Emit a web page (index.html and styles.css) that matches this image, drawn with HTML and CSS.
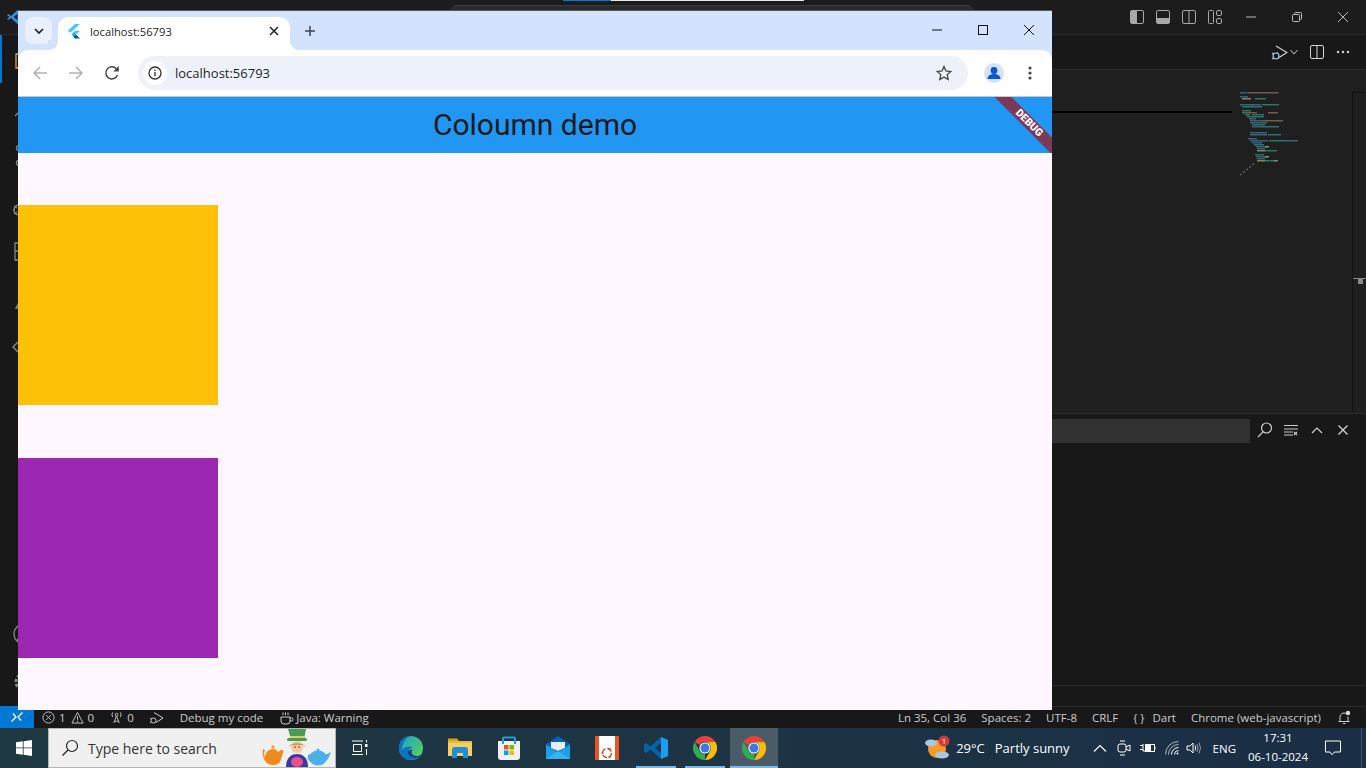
FILE: index.html
```html
<!DOCTYPE html>
<html lang="en">
<head>
  <meta charset="UTF-8">
  <title>Coloumn demo</title>
  <link rel="stylesheet" href="styles.css">
</head>
<body>
  <svg class="defs" width="0" height="0">
    <symbol id="chrome" viewBox="0 0 24 24">
      <path fill="#ea4335" d="M1.6 6A12 12 0 0 1 22.4 6H12a6 6 0 0 0-5.2 3z"/>
      <path fill="#fbbc04" d="M22.4 6A12 12 0 0 1 12 24l5.2-9A6 6 0 0 0 12 6z"/>
      <path fill="#34a853" d="M12 24A12 12 0 0 1 1.6 6l5.2 9A6 6 0 0 0 12 18z"/>
      <circle cx="12" cy="12" r="5.6" fill="#fff"/>
      <circle cx="12" cy="12" r="4.5" fill="#3b78e7"/>
    </symbol>
  </svg>

  <div class="desktop">
    <div class="vscode">
      <div class="titlebar">
        <svg class="vs-logo" width="16" height="16" viewBox="0 0 16 16"><path fill="#2f8fe0" d="M11.5 1 5 7 2.2 5 1 6l2.6 2L1 10l1.2 1L5 9l6.5 6 3.5-1.5v-11zM11.5 5v6L7.6 8z" fill-rule="evenodd"/></svg>
        <div class="command-center"></div>
        <div class="progress"><span class="progress-blue"></span><span class="progress-white"></span></div>
        <div class="layout-icons">
          <svg width="14" height="14" viewBox="0 0 14 14"><rect x=".5" y=".5" width="13" height="13" rx="1.5" fill="none" stroke="#a8a8a8"/><rect x="1" y="1" width="6" height="12" fill="#a8a8a8"/></svg>
          <svg width="14" height="14" viewBox="0 0 14 14"><rect x=".5" y=".5" width="13" height="13" rx="1.5" fill="none" stroke="#a8a8a8"/><rect x="1" y="8" width="12" height="5" fill="#a8a8a8"/></svg>
          <svg width="14" height="14" viewBox="0 0 14 14"><rect x=".5" y=".5" width="13" height="13" rx="1.5" fill="none" stroke="#a8a8a8"/><path d="M7 1v12" stroke="#a8a8a8"/></svg>
          <svg width="14" height="14" viewBox="0 0 14 14" fill="none" stroke="#a8a8a8"><rect x=".5" y=".5" width="5" height="13" rx="1"/><rect x="8.5" y=".5" width="5" height="5" rx="1.5"/><rect x="8.5" y="8.5" width="5" height="5" rx="1.5"/></svg>
        </div>
        <div class="vs-controls">
          <div class="vs-control"><svg width="12" height="12" viewBox="0 0 12 12"><path d="M1 6h10" stroke="#bbb"/></svg></div>
          <div class="vs-control"><svg width="12" height="12" viewBox="0 0 12 12" fill="none" stroke="#bbb"><rect x="1.5" y="3.5" width="7" height="7" rx="1"/><path d="M3.5 3.5v-1a1 1 0 0 1 1-1h5a1 1 0 0 1 1 1v5a1 1 0 0 1-1 1h-1"/></svg></div>
          <div class="vs-control"><svg width="12" height="12" viewBox="0 0 12 12"><path d="M1 1l10 10M11 1 1 11" stroke="#bbb"/></svg></div>
        </div>
      </div>

      <div class="vs-main">
        <div class="activity">
          <div class="activity-item is-active"><svg width="24" height="24" viewBox="0 0 24 24" fill="none" stroke="#d7d7d7" stroke-width="1.3"><path d="M9 3h8l4 4v12H9z"/><path d="M9 7H4v14h11v-2" stroke="#e0a050"/></svg></div>
          <div class="activity-item"><svg width="24" height="24" viewBox="0 0 24 24" fill="none" stroke="#868686" stroke-width="1.3"><circle cx="14" cy="10" r="6"/><path d="M9.5 14.5 3 21"/></svg></div>
          <div class="activity-item"><svg width="24" height="24" viewBox="0 0 24 24" fill="none" stroke="#868686" stroke-width="1.3"><circle cx="7" cy="5" r="2.5"/><circle cx="7" cy="20" r="2.5"/><circle cx="17" cy="8" r="2.5"/><path d="M7 8v9M17 11c0 4-10 2-10 6"/></svg></div>
          <div class="activity-item activity-debug"><svg width="24" height="24" viewBox="0 0 24 24" fill="none" stroke="#868686" stroke-width="1.3"><path d="M10 3l11 8-11 8"/><circle cx="7" cy="16" r="5"/><path d="M2 12l3 2M2 20l3-2M1 16h2"/></svg></div>
          <div class="activity-item"><svg width="24" height="24" viewBox="0 0 24 24" fill="none" stroke="#868686" stroke-width="1.3"><path d="M3 4h9v8h8v9H3zM3 12h9v9"/><rect x="15" y="2" width="7" height="7"/></svg></div>
          <div class="activity-item"><svg width="24" height="24" viewBox="0 0 24 24" fill="none" stroke="#868686" stroke-width="1.3"><path d="M9 3h6M10 3v7l-6 11h16l-6-11V3"/></svg></div>
          <div class="activity-item"><svg width="24" height="24" viewBox="0 0 24 24" fill="none" stroke="#868686" stroke-width="1.5"><path d="M6 7 1 12l5 5M18 7l5 5-5 5"/></svg></div>
          <div class="activity-gap"></div>
          <div class="activity-item"><svg width="24" height="24" viewBox="0 0 24 24" fill="none" stroke="#868686" stroke-width="1.3"><circle cx="12" cy="12" r="10"/><circle cx="12" cy="9" r="3.5"/><path d="M5 19c2-5 12-5 14 0"/></svg></div>
          <div class="activity-item"><svg width="24" height="24" viewBox="0 0 24 24" fill="none" stroke="#868686" stroke-width="3" stroke-dasharray="3 2"><circle cx="12" cy="12" r="8"/></svg></div>
        </div>

        <div class="workbench">
          <div class="tabrow">
            <svg class="tab-debug" width="17" height="17" viewBox="0 0 17 17" fill="none" stroke="#d5d5d5" stroke-width="1.2"><path d="M5 2l11 6.500-8 5"/><circle cx="5" cy="12" r="3" stroke="#a9c8f2"/><path d="M1 9l2 1M1 15l2-1M7 8.500 6 9.500" stroke="#a9c8f2"/></svg>
            <svg class="tab-chevron" width="10" height="10" viewBox="0 0 10 10" fill="none" stroke="#c8c8c8"><path d="M1.5 3 5 7l3.500-4"/></svg>
            <svg class="tab-split" width="14" height="14" viewBox="0 0 14 14" fill="none" stroke="#d5d5d5"><rect x=".5" y=".5" width="13" height="13" rx="1.500"/><path d="M7 1v12"/></svg>
            <svg class="tab-more" width="14" height="4" viewBox="0 0 14 4" fill="#d5d5d5"><circle cx="2" cy="2" r="1.200"/><circle cx="7" cy="2" r="1.200"/><circle cx="12" cy="2" r="1.200"/></svg>
          </div>

          <div class="editor">
            <div class="code-area"><div class="sticky-shadow"></div></div>
            <div class="minimap">
              <svg width="64" height="86" viewBox="0 0 64 86">
                <g fill="#3f6d8c" opacity=".85">
                  <rect x="0" y="0" width="7" height="1.500"/><rect x="0" y="4" width="8" height="1.500"/><rect x="0" y="12" width="7" height="1.500"/><rect x="14" y="12" width="7" height="1.500"/>
                  <rect x="10" y="28" width="13" height="1.500"/><rect x="10" y="30" width="17" height="1.500"/><rect x="12" y="34" width="11" height="1.500"/><rect x="10" y="40" width="17" height="1.500"/>
                  <rect x="10" y="42" width="17" height="1.500"/><rect x="8" y="46" width="9" height="1.500"/><rect x="10" y="48" width="18" height="1.500"/><rect x="44" y="48" width="14" height="1.500"/>
                  <rect x="12" y="50" width="10" height="1.500"/><rect x="16" y="54" width="12" height="1.500"/><rect x="17" y="56" width="8" height="1.500"/><rect x="16" y="64" width="12" height="1.500"/><rect x="17" y="66" width="8" height="1.500"/>
                </g>
                <g fill="#7f6252" opacity=".9">
                  <rect x="7.500" y="0" width="31" height="1.500"/><rect x="7" y="20" width="10" height="1.500"/><rect x="23" y="28" width="20" height="1.500"/><rect x="28" y="20" width="10" height="1.500"/>
                  <rect x="5" y="22" width="5" height="1.500"/>
                </g>
                <g fill="#2f7f6e" opacity=".9">
                  <rect x="15" y="6" width="11" height="1.500"/><rect x="7" y="12" width="7" height="1.500"/><rect x="22" y="12" width="17" height="1.500"/><rect x="2" y="14" width="20" height="1.500"/>
                  <rect x="2" y="18" width="9" height="1.500"/><rect x="2" y="20" width="5" height="1.500"/><rect x="12" y="22" width="12" height="1.500"/><rect x="7" y="24" width="17" height="1.500"/>
                  <rect x="9" y="26" width="7" height="1.500"/><rect x="12" y="32" width="13" height="1.500"/><rect x="23" y="34" width="16" height="1.500"/><rect x="28" y="42" width="13" height="1.500"/>
                  <rect x="29" y="48" width="15" height="1.500"/><rect x="14" y="52" width="10" height="1.500"/><rect x="25" y="58" width="12" height="1.500"/><rect x="15" y="62" width="9" height="1.500"/><rect x="25" y="68" width="10" height="1.500"/>
                </g>
                <g fill="#8f9a7a" opacity=".85">
                  <rect x="2" y="6" width="9" height="1.500"/><rect x="17" y="58" width="8" height="1.500"/><rect x="17" y="68" width="8" height="1.500"/><rect x="25" y="54" width="4" height="1.500"/><rect x="25" y="64" width="4" height="1.500"/><rect x="34" y="68" width="4" height="1.500"/>
                </g>
                <path d="M0 83 15 71" stroke="#6a6a6a" stroke-width="1.200" stroke-dasharray="2 2"/>
              </svg>
            </div>
            <div class="ruler"><div class="ruler-mark"></div></div>
          </div>

          <div class="panel">
            <div class="panel-head">
              <div class="filter-box"></div>
              <div class="panel-tools">
                <svg width="16" height="16" viewBox="0 0 16 16" fill="none" stroke="#d0d0d0" stroke-width="1.200"><circle cx="9.500" cy="6" r="5"/><path d="M6 9.800 1 15"/></svg>
                <svg class="tool-clear" width="16" height="12" viewBox="0 0 16 12" fill="none" stroke="#c8c8c8"><path d="M1 1.500h14M1 5h14M1 8h9M1 11h9"/><path d="M11 8l3 3M14 8l-3 3" stroke-width="1.200"/></svg>
                <svg class="tool-up" width="12" height="8" viewBox="0 0 12 8" fill="none" stroke="#d0d0d0" stroke-width="1.200"><path d="M1 7l5-5 5 5"/></svg>
                <svg class="tool-close" width="12" height="12" viewBox="0 0 12 12" fill="none" stroke="#d8d8d8" stroke-width="1.200"><path d="M1.500 1.500l9 9M10.500 1.500l-9 9"/></svg>
              </div>
            </div>
          </div>
          <div class="panel-foot"></div>
        </div>
      </div>

      <div class="statusbar">
        <div class="remote"><svg width="14" height="12" viewBox="0 0 14 12" fill="none" stroke="#fff" stroke-width="1.300"><path d="M1.500 10.500 6 6 3 2.500M12.500 1.500 8 6l3 3.500"/></svg></div>
        <div class="st-left">
          <div class="st-item">
            <svg width="13" height="13" viewBox="0 0 14 14" fill="none" stroke="#ccc"><circle cx="7" cy="7" r="6"/><path d="M4.500 4.500l5 5M9.500 4.500l-5 5"/></svg>
            <span>1</span>
            <svg class="st-warn" width="13" height="13" viewBox="0 0 14 14" fill="none" stroke="#ccc"><path d="M7 1.500 13 13H1zM7 5.500v4M7 10.500v1.500"/></svg>
            <span>0</span>
          </div>
          <div class="st-item st-antenna">
            <svg width="13" height="13" viewBox="0 0 14 14" fill="none" stroke="#ccc"><circle cx="7" cy="4" r="1.500"/><path d="M7 5.500 4 13M7 5.500 10 13M5 11h4M3 1.500Q1 4 3 6.500M11 1.500q2 2.500 0 5"/></svg>
            <span>0</span>
          </div>
          <div class="st-item st-debug">
            <svg width="15" height="14" viewBox="0 0 15 14" fill="none" stroke="#ccc"><path d="M5 1.500l9 5.500-7 4.500"/><circle cx="4.500" cy="9.500" r="2.500"/><path d="M1 7l1.500 1M1 12l1.500-1"/></svg>
          </div>
          <div class="st-item st-code">Debug my code</div>
          <div class="st-item st-java">
            <svg width="15" height="14" viewBox="0 0 15 14" fill="none" stroke="#ccc"><path d="M2 6h9v4a3 3 0 0 1-3 3H5a3 3 0 0 1-3-3zM11 7h1.500a1.500 1.500 0 0 1 0 3H11M4 4V1.500M6.500 4V1.500M9 4V1.500"/></svg>
            <span>Java: Warning</span>
          </div>
        </div>
        <div class="st-right">
          <div class="st-item">Ln 35, Col 36</div>
          <div class="st-item">Spaces: 2</div>
          <div class="st-item">UTF-8</div>
          <div class="st-item">CRLF</div>
          <div class="st-item st-lang"><span class="st-braces">{ }</span><span>Dart</span></div>
          <div class="st-item">Chrome (web-javascript)</div>
          <div class="st-item st-bell">
            <svg width="15" height="15" viewBox="0 0 15 15" fill="none" stroke="#ccc"><path d="M3 11V7a4 4 0 0 1 6-3.500M11 6.500V11M1.500 11.500h11M6 13.500h2.500"/><circle cx="11" cy="3" r="2.200" fill="#ddd" stroke="none"/></svg>
          </div>
        </div>
      </div>
    </div>

    <div class="taskbar">
      <div class="start">
        <svg width="16" height="16" viewBox="0 0 16 16" fill="#fff"><path d="M0 2.200 6.800 1.300v6.200H0zM7.600 1.200 16 0v7.500H7.600zM0 8.300h6.800v6.400L0 13.800zM7.600 8.300H16V16l-8.400-1.200z"/></svg>
      </div>
      <div class="search">
        <svg width="18" height="18" viewBox="0 0 18 18" fill="none" stroke="#222" stroke-width="1.200"><circle cx="11" cy="7" r="5.500"/><path d="M7 11 1.500 16.500"/></svg>
        <span class="search-text">Type here to search</span>
        <svg class="hatter" width="70" height="38" viewBox="0 0 70 38">
          <path fill="#f08a1a" d="M11 20c-5 0-8 4-8 9-1-3-1-6 0-8l-2-1c-1 4 0 10 3 13 3 4 11 4 14 0l3-9c1-1 0-4-2-3l-3 2c-1-2-3-3-5-3z"/>
          <circle cx="11" cy="18" r="1.800" fill="#f5a030"/>
          <path fill="#3b3aa0" d="M24 38c0-9 5-13 11-13s11 4 11 13z"/>
          <ellipse cx="35" cy="33" rx="6" ry="5" fill="#e8508c"/>
          <circle cx="35" cy="18" r="6" fill="#f2c9a0"/>
          <path fill="#d09a40" d="M27 18c0-5 16-5 16 0l-2-2H29z"/>
          <circle cx="33" cy="18" r=".8" fill="#335"/><circle cx="37" cy="18" r=".8" fill="#335"/>
          <path fill="#4a9a5a" d="M26 0h18l-2 10H29z"/>
          <rect x="25" y="9" width="20" height="3" rx="1.500" fill="#4a9a5a"/>
          <rect x="28" y="7" width="14" height="2" fill="#e0d060"/>
          <ellipse cx="56" cy="29" rx="9" ry="7.500" fill="#4ab0e8"/>
          <path fill="#4ab0e8" d="M61 27l8-4-3 7-4 3zM48 25c-3 0-3 7 1 8l1-2c-2-1-2-3 0-4z"/>
          <circle cx="56" cy="21" r="1.500" fill="#4ab0e8"/>
        </svg>
      </div>
      <div class="taskview">
        <svg width="16" height="16" viewBox="0 0 16 16" fill="none" stroke="#fff"><path d="M0 1h11M0 14.500h11M1.500 4.500h8v7h-8z"/><rect x="13" y="4" width="2.500" height="3" fill="#fff" stroke="none"/><path d="M14.500 0v2.500M14.500 9v6"/></svg>
      </div>
      <div class="apps">
        <div class="app">
          <svg width="24" height="24" viewBox="0 0 24 24"><defs><linearGradient id="edgeTop" x1="0" y1="0" x2="1" y2="1"><stop offset="0" stop-color="#17a2c8"/><stop offset="1" stop-color="#62d654"/></linearGradient></defs><circle cx="12" cy="12" r="12" fill="url(#edgeTop)"/><path fill="#0c72c4" d="M12 0C5 0 0 5.500 0 12c0 7 5.500 12 12 12 2.500 0 5-.8 7-2.200-4 1-8.500-.5-9.500-4-.8-3 1-5.500 4-6.300-3-2-9-1-10.500 3C3 8 6 1.500 12 0z"/><path fill="#0b3f7d" d="M9 16c0 4 4 6.500 9 5.800 2-.5 3.500-1.700 4.500-3.300-4 2.500-8 1.500-9.500-.5-1-1.500-.5-3.500 1-4.500-3 0-5 1-5 2.500z"/></svg>
        </div>
        <div class="app">
          <svg width="24" height="24" viewBox="0 0 24 24"><path fill="#d9a11c" d="M0 2.500h9l2 2.500H0z"/><path fill="#f6cf5c" d="M0 5h22l2 .5V20H0z"/><path fill="#e8b93c" d="M0 5h24v2H0z"/><path fill="#1f8fdc" d="M4 14c0-2 1-3 2-3h12c1 0 2 1 2 3v8h-5v-5H9v5H4z"/></svg>
        </div>
        <div class="app">
          <svg width="24" height="24" viewBox="0 0 24 24"><path fill="#f0f0f0" d="M1 5h22v16a3 3 0 0 1-3 3H4a3 3 0 0 1-3-3z"/><path fill="none" stroke="#19a0e2" stroke-width="2" d="M6 8V2.500a1 1 0 0 1 1-1h10a1 1 0 0 1 1 1V8"/><rect x="7" y="9" width="4.500" height="4.500" fill="#f25022"/><rect x="12.500" y="9" width="4.500" height="4.500" fill="#7fba00"/><rect x="7" y="14.500" width="4.500" height="4.500" fill="#00a4ef"/><rect x="12.500" y="14.500" width="4.500" height="4.500" fill="#ffb900"/></svg>
        </div>
        <div class="app">
          <svg width="24" height="24" viewBox="0 0 24 24"><path fill="#0a62b3" d="M12 0 24 8v4H0V8z"/><path fill="#e8edf2" d="M5 6h14v6l-7 3-7-3z"/><path fill="#1b9fe8" d="M0 8.500 12 16l12-7.500V23H0z"/><path fill="#35b4f2" d="M0 23 12 15l12 8z"/></svg>
        </div>
        <div class="app">
          <svg width="24" height="24" viewBox="0 0 24 24"><rect width="24" height="24" fill="#fff"/><rect width="4" height="24" fill="#e95420"/><rect x="20" width="4" height="24" fill="#e95420"/><circle cx="12" cy="17" r="4.500" fill="none" stroke="#d8402a" stroke-width="1.300" stroke-dasharray="5 2"/><circle cx="7.500" cy="17" r="1.100" fill="#d8402a"/><circle cx="14.500" cy="13" r="1.100" fill="#d8402a"/><circle cx="14.500" cy="21" r="1.100" fill="#d8402a"/></svg>
        </div>
        <div class="app has-window">
          <svg width="24" height="24" viewBox="0 0 24 24"><path fill="#0065a9" d="M17 1 6.500 10.500 2 7 0 8.500v7L2 17l4.500-3.500L17 23l7-3V4zM17 7v10l-6-5z" fill-rule="evenodd"/><path fill="#1f9cf0" d="M17 1l7 3v16l-7 3z"/></svg>
        </div>
        <div class="app has-window"><svg width="24" height="24"><use href="#chrome"/></svg></div>
        <div class="app has-window is-current"><svg width="24" height="24"><use href="#chrome"/></svg></div>
      </div>

      <div class="tray">
        <div class="weather">
          <svg width="26" height="26" viewBox="0 0 26 26"><circle cx="12" cy="14" r="9" fill="#f59a23"/><ellipse cx="6" cy="8" rx="6" ry="3.500" fill="#a9c6e8"/><ellipse cx="17" cy="20" rx="7" ry="3.500" fill="#a9c6e8"/><circle cx="19" cy="6" r="5.500" fill="#d23a3a"/><text class="weather-badge" x="19" y="9">1</text></svg>
          <span class="temp">29°C</span>
          <span class="sky">Partly sunny</span>
        </div>
        <div class="tray-icons">
          <svg class="tray-caret" width="14" height="8" viewBox="0 0 14 8" fill="none" stroke="#fff" stroke-width="1.100"><path d="M1 7.500 7 1.500l6 6"/></svg>
          <svg class="tray-meet" width="14" height="16" viewBox="0 0 14 16" fill="none" stroke="#fff"><rect x="1" y="4" width="8" height="8" rx="2"/><path d="M9 7l4-2v6l-4-2M3 1h5M3 15h5"/></svg>
          <svg class="tray-battery" width="16" height="12" viewBox="0 0 16 12" fill="none" stroke="#fff"><rect x="5.500" y="2.500" width="9" height="7"/><rect x="5.500" y="2.500" width="5" height="7" fill="#fff"/><path d="M0 3.500h3M0 7.500h3M3 2v7h2M15 5v2"/></svg>
          <svg class="tray-wifi" width="14" height="14" viewBox="0 0 14 14" fill="none" stroke="#fff"><path d="M.5 13.500a13 13 0 0 1 13-13M3.500 13.500a10 10 0 0 1 10-10" opacity=".65"/><path d="M6.500 13.500a7 7 0 0 1 7-7M9.500 13.500a4 4 0 0 1 4-4"/><circle cx="12.500" cy="12.500" r="1" fill="#fff" stroke="none"/></svg>
          <svg class="tray-speaker" width="16" height="14" viewBox="0 0 16 14" fill="none" stroke="#fff"><path d="M1 5h3l3-3v10L4 9H1z"/><path d="M9 4.500q1.500 2.500 0 5"/><path d="M11 3q2 4 0 8M13 1.500q3 5.500 0 11" opacity=".5"/></svg>
          <span class="tray-lang">ENG</span>
        </div>
        <div class="clock"><span>17:31</span><span>06-10-2024</span></div>
        <div class="notify">
          <svg width="16" height="16" viewBox="0 0 16 16" fill="none" stroke="#fff"><path d="M.5 1h15v11H9.500L7 14.700 5 12H.5z"/></svg>
        </div>
      </div>
    </div>

    <!-- browser window lies over the editor -->
    <div class="browser">
      <div class="tabstrip">
        <div class="tab-search"><svg width="10" height="6" viewBox="0 0 10 6" fill="none" stroke="#1f1f1f" stroke-width="1.700"><path d="M1 1l4 4 4-4"/></svg></div>
        <div class="tab">
          <svg width="14" height="16" viewBox="0 0 14 16"><path fill="#47c5fb" d="M8 1h5L3.200 9.800.8 7.800z"/><path fill="#47c5fb" d="M8 7.700h5L8.800 11.800 6.300 9.400z"/><path fill="#00569e" d="M6.300 13.700 8.800 11.500 13 15.500H8z"/><path fill="#00b5f8" d="M4.700 11.500 6.900 9.300 9 11.500l-2.500 2.300z"/></svg>
          <span class="tab-title">localhost:56793</span>
          <svg class="tab-close" width="10" height="10" viewBox="0 0 10 10" stroke="#1f1f1f" stroke-width="1.500"><path d="M1 1l8 8M9 1 1 9"/></svg>
        </div>
        <svg class="tab-new" width="12" height="12" viewBox="0 0 12 12" stroke="#444" stroke-width="1.500"><path d="M6 1v10M1 6h10"/></svg>
        <div class="win-controls">
          <div class="win-control"><svg width="12" height="12" viewBox="0 0 12 12"><path d="M1 6h10" stroke="#111"/></svg></div>
          <div class="win-control"><svg width="12" height="12" viewBox="0 0 12 12" fill="none"><rect x="1.500" y="1.500" width="9" height="9" stroke="#111"/></svg></div>
          <div class="win-control"><svg width="12" height="12" viewBox="0 0 12 12"><path d="M1 1l10 10M11 1 1 11" stroke="#111"/></svg></div>
        </div>
      </div>

      <div class="toolbar">
        <div class="nav-btn"><svg width="16" height="16" viewBox="0 0 16 16" fill="none" stroke="#b0b3b8" stroke-width="1.500"><path d="M15 8H2M8 2 2 8l6 6"/></svg></div>
        <div class="nav-btn"><svg width="16" height="16" viewBox="0 0 16 16" fill="none" stroke="#b0b3b8" stroke-width="1.500"><path d="M1 8h13M8 2l6 6-6 6"/></svg></div>
        <div class="nav-btn"><svg width="16" height="16" viewBox="0 0 16 16" fill="none" stroke="#444746" stroke-width="1.500"><path d="M13.500 10A6 6 0 1 1 12.300 3.800L14 5.500"/><path fill="#444746" stroke="none" d="M14.800 1v5.500H9.300z"/></svg></div>
        <div class="omnibox">
          <div class="site-info"><svg width="14" height="14" viewBox="0 0 14 14" fill="none" stroke="#333" stroke-width="1.300"><circle cx="7" cy="7" r="6"/><path d="M7 6v4.200M7 3.500v1.400"/></svg></div>
          <span class="url">localhost:56793</span>
          <svg class="star" width="16" height="16" viewBox="0 0 16 16" fill="none" stroke="#444746" stroke-width="1.300"><path d="M8 1.500l2 4.500 4.800.5-3.600 3.200 1 4.800L8 12.100 3.800 14.500l1-4.800L1.200 6.500 6 6z"/></svg>
        </div>
        <div class="profile"><svg width="20" height="20" viewBox="0 0 20 20"><circle cx="10" cy="10" r="10" fill="#d3e3fd"/><circle cx="10" cy="7.500" r="3.400" fill="#0b57d0"/><path fill="#0b57d0" d="M3.500 16c0-3.500 3-5 6.500-5s6.500 1.500 6.500 5z"/></svg></div>
        <div class="menu-dots"><svg width="4" height="14" viewBox="0 0 4 14" fill="#444746"><circle cx="2" cy="2" r="1.600"/><circle cx="2" cy="7" r="1.600"/><circle cx="2" cy="12" r="1.600"/></svg></div>
      </div>

      <div class="flutter-app">
        <div class="appbar">
          <span class="appbar-title">Coloumn demo</span>
          <div class="debug-banner">DEBUG</div>
        </div>
        <div class="app-body">
          <div class="box box-amber"></div>
          <div class="box box-purple"></div>
        </div>
      </div>
    </div>
  </div>
</body>
</html>
```

FILE: styles.css
```css
* {
  box-sizing: border-box;
}

body {
  margin: 0;
  background-color: #181818;
  font-family: "Open Sans", "Noto Sans", sans-serif;
  overflow: hidden;
}

.defs {
  position: absolute;
}

svg {
  display: block;
  flex: none;
}

.desktop {
  position: relative;
  width: 1366px;
  height: 768px;
  display: flex;
  flex-direction: column;
}

/* vscode behind the browser */
.vscode {
  flex: 1;
  display: flex;
  flex-direction: column;
  min-height: 0;
}

.titlebar {
  position: relative;
  height: 35px;
  flex: none;
  display: flex;
  align-items: center;
  padding-left: 6px;
  background-color: #1c1c1c;
  border-bottom: 1px solid #2b2b2b;
}

.command-center {
  align-self: flex-start;
  width: 522px;
  height: 24px;
  margin: 5px 0 0 429px;
  background-color: #2a2a2a;
  border: 1px solid #3c3c3c;
  border-radius: 6px;
}

.progress {
  position: absolute;
  top: 0;
  left: 563px;
  display: flex;
  height: 1px;
}

.progress-blue {
  width: 48px;
  background-color: #0078d4;
}

.progress-white {
  width: 193px;
  background-color: #e8e8e8;
}

.layout-icons {
  display: flex;
  gap: 12px;
  margin-left: auto;
  margin-right: 6px;
}

.vs-controls {
  display: flex;
}

.vs-control {
  width: 46px;
  height: 34px;
  display: flex;
  align-items: center;
  justify-content: center;
}

.vs-main {
  flex: 1;
  display: flex;
  min-height: 0;
}

.activity {
  width: 48px;
  flex: none;
  display: flex;
  flex-direction: column;
  background-color: #181818;
}

.activity-item {
  height: 48px;
  flex: none;
  display: flex;
  align-items: center;
  justify-content: center;
}

.activity-item.is-active {
  border-left: 2px solid #0078d4;
  padding-right: 2px;
}

.activity-debug {
  padding-top: 6px;
}

.activity-gap {
  flex: 1;
}

.workbench {
  flex: 1;
  min-width: 0;
  display: flex;
  flex-direction: column;
}

.tabrow {
  height: 35px;
  flex: none;
  display: flex;
  align-items: center;
  padding-right: 16px;
  justify-content: flex-end;
  background-color: #181818;
  border-bottom: 1px solid #2b2b2b;
}

.tab-chevron {
  margin-left: 1px;
}

.tab-split {
  margin-left: 11px;
}

.tab-more {
  margin-left: 12px;
}

.editor {
  flex: 1;
  display: flex;
  min-height: 0;
  background-color: #1f1f1f;
}

.code-area {
  flex: 1;
  padding-top: 41px;
}

.sticky-shadow {
  height: 2px;
  background-color: #000;
}

.minimap {
  width: 120px;
  flex: none;
  padding: 22px 0 0 8px;
}

.ruler {
  width: 14px;
  flex: none;
  margin-top: 22px;
  padding-top: 185px;
  border-left: 1px solid #111;
  border-top: 1px solid #111;
}

.ruler-mark {
  height: 1px;
  background-color: #8a8a8a;
  position: relative;
}

.ruler-mark::after {
  content: "";
  position: absolute;
  top: 1px;
  left: 5px;
  width: 5px;
  height: 5px;
  background-color: #8a8a8a;
}

.panel {
  height: 273px;
  flex: none;
  background-color: #181818;
  border-top: 1px solid #2b2b2b;
  border-bottom: 1px solid #2b2b2b;
}

.panel-head {
  display: flex;
  align-items: center;
  height: 32px;
  padding-top: 2px;
}

.filter-box {
  flex: 1;
  height: 24px;
  margin-right: 7px;
  background-color: #313131;
}

.panel-tools {
  width: 109px;
  flex: none;
  display: flex;
  align-items: center;
  margin-top: -2px;
}

.tool-clear {
  margin-left: 10px;
}

.tool-up {
  margin-left: 12px;
}

.tool-close {
  margin-left: 14px;
}

.panel-foot {
  height: 20px;
  flex: none;
  background-color: #181818;
}

.statusbar {
  height: 22px;
  flex: none;
  display: flex;
  align-items: center;
  font-size: 11.500px;
  color: #cccccc;
  background-color: #181818;
  border-top: 1px solid #2b2b2b;
}

.remote {
  width: 34px;
  height: 22px;
  margin-top: -1px;
  display: flex;
  align-items: center;
  justify-content: center;
  background-color: #0078d4;
}

.st-left,
.st-right {
  display: flex;
  align-items: center;
}

.st-left {
  padding-left: 8px;
}

.st-right {
  margin-left: auto;
  gap: 15px;
  padding-right: 14px;
}

.st-item {
  display: flex;
  align-items: center;
  gap: 4px;
  white-space: nowrap;
}

.st-warn {
  margin-left: 1px;
}

.st-antenna {
  margin-left: 16px;
}

.st-debug {
  margin-left: 15px;
}

.st-code {
  margin-left: 16px;
}

.st-java {
  margin-left: 16px;
  gap: 2px;
}

.st-lang {
  gap: 8px;
}

.st-braces {
  font-size: 11px;
}

.st-bell {
  margin-left: 1px;
}

/* windows taskbar */
.taskbar {
  height: 40px;
  flex: none;
  display: flex;
  align-items: stretch;
  background: linear-gradient(to right, #1f3942, #1c3344 60%, #1a2e45);
}

.start {
  width: 48px;
  flex: none;
  display: flex;
  align-items: center;
  justify-content: center;
}

.search {
  width: 288px;
  flex: none;
  display: flex;
  align-items: flex-end;
  padding-left: 12px;
  background-color: #f0f0f0;
  border: 1px solid #b5b5b5;
  overflow: hidden;
}

.search > svg:first-child {
  margin-bottom: 10px;
}

.search-text {
  align-self: center;
  margin-left: 9px;
  font-size: 14px;
  color: #333333;
}

.hatter {
  margin-left: auto;
  margin-right: 3px;
}

.taskview {
  width: 48px;
  flex: none;
  display: flex;
  align-items: center;
  justify-content: center;
}

.apps {
  display: flex;
  gap: 1px;
  margin-left: 3px;
}

.app {
  position: relative;
  width: 48px;
  display: flex;
  align-items: center;
  justify-content: center;
}

.app.has-window::after {
  content: "";
  position: absolute;
  left: 4px;
  right: 4px;
  bottom: 0;
  height: 2px;
  background-color: #76b9ed;
}

.app.is-current {
  background-color: #4a5c68;
}

.app.is-current::after {
  left: 0;
  right: 0;
}

.tray {
  margin-left: auto;
  display: flex;
  align-items: center;
  color: #ffffff;
  font-size: 13px;
}

.weather {
  display: flex;
  align-items: center;
}

.weather-badge {
  font-size: 8px;
  fill: #ffffff;
  text-anchor: middle;
  font-family: "Open Sans", sans-serif;
}

.temp {
  margin-left: 5px;
}

.sky {
  margin-left: 10px;
}

.tray-icons {
  display: flex;
  align-items: center;
  margin-left: 23px;
}

.tray-meet {
  margin-left: 10px;
}

.tray-battery {
  margin-left: 9px;
}

.tray-wifi {
  margin-left: 9px;
}

.tray-speaker {
  margin-left: 7px;
}

.tray-lang {
  margin-left: 11px;
  font-size: 11.500px;
}

.clock {
  width: 64px;
  display: flex;
  flex-direction: column;
  align-items: center;
  gap: 3px;
  margin-left: 10px;
  padding-bottom: 2px;
  font-size: 11.500px;
  line-height: 16px;
}

.notify {
  width: 52px;
  align-self: stretch;
  display: flex;
  align-items: center;
  justify-content: center;
  padding-right: 6px;
  border-right: 1px solid #3e5566;
  margin-right: 4px;
}

/* chrome window */
.browser {
  position: absolute;
  left: 18px;
  top: 10px;
  width: 1034px;
  height: 700px;
  display: flex;
  flex-direction: column;
  border-top: 1px solid #55565c;
  background-color: #d3e3fd;
}

.tabstrip {
  height: 39px;
  flex: none;
  display: flex;
  align-items: flex-end;
  padding-left: 7px;
}

.tab-search {
  width: 27px;
  height: 27px;
  margin-bottom: 6px;
  display: flex;
  align-items: center;
  justify-content: center;
  background-color: #e9f0fe;
  border-radius: 8px;
}

.tab {
  position: relative;
  width: 232px;
  height: 33px;
  margin-left: 6px;
  padding: 0 11px 5px 9px;
  display: flex;
  align-items: center;
  background-color: #ffffff;
  border-radius: 10px 10px 0 0;
}

.tab::before,
.tab::after {
  content: "";
  position: absolute;
  bottom: 0;
  width: 10px;
  height: 10px;
}

.tab::before {
  left: -10px;
  background: radial-gradient(circle at 0 0, #d3e3fd 10px, #ffffff 10.500px);
}

.tab::after {
  right: -10px;
  background: radial-gradient(circle at 100% 0, #d3e3fd 10px, #ffffff 10.500px);
}

.tab-title {
  margin-left: 9px;
  font-size: 11.200px;
  color: #1f1f1f;
}

.tab-close {
  margin-left: auto;
}

.tab-new {
  margin: 0 0 13px 14px;
}

.win-controls {
  display: flex;
  align-self: flex-start;
  margin-left: auto;
}

.win-control {
  width: 46px;
  height: 38px;
  display: flex;
  align-items: center;
  justify-content: center;
}

.toolbar {
  height: 47px;
  flex: none;
  display: flex;
  align-items: center;
  padding: 0 0 1px 4px;
  background-color: #ffffff;
  border-bottom: 1px solid #c7c7c7;
  border-radius: 10px 10px 0 0;
}

.nav-btn {
  width: 36px;
  display: flex;
  justify-content: center;
}

.omnibox {
  width: 830px;
  height: 34px;
  margin-left: 8px;
  padding-left: 5px;
  padding-right: 16px;
  display: flex;
  align-items: center;
  background-color: #edf2fa;
  border-radius: 17px;
}

.site-info {
  width: 24px;
  height: 24px;
  display: flex;
  align-items: center;
  justify-content: center;
  background-color: #ffffff;
  border-radius: 50%;
}

.url {
  margin-left: 8px;
  font-size: 13px;
  color: #1f1f1f;
}

.star {
  margin-left: auto;
}

.profile {
  margin-left: 16px;
}

.menu-dots {
  margin-left: 24px;
}

.flutter-app {
  flex: 1;
  display: flex;
  flex-direction: column;
  min-height: 0;
  background-color: #fef7ff;
}

.appbar {
  position: relative;
  height: 56px;
  flex: none;
  display: flex;
  align-items: center;
  justify-content: center;
  padding-bottom: 2px;
  overflow: hidden;
  background-color: #2196f3;
}

.appbar-title {
  font-family: Roboto, sans-serif;
  font-size: 30px;
  color: #1d1b20;
}

.debug-banner {
  position: absolute;
  top: 20px;
  right: -37px;
  width: 120px;
  height: 12px;
  transform: rotate(45deg);
  background-color: #7b3a58;
  color: #ffffff;
  font-family: Roboto, sans-serif;
  font-size: 10.500px;
  font-weight: 900;
  line-height: 12px;
  text-align: center;
}

.app-body {
  flex: 1;
  display: flex;
  flex-direction: column;
  justify-content: space-evenly;
}

.box {
  width: 200px;
  height: 200px;
}

.box-amber {
  background-color: #ffc107;
}

.box-purple {
  background-color: #9c27b0;
}
```
